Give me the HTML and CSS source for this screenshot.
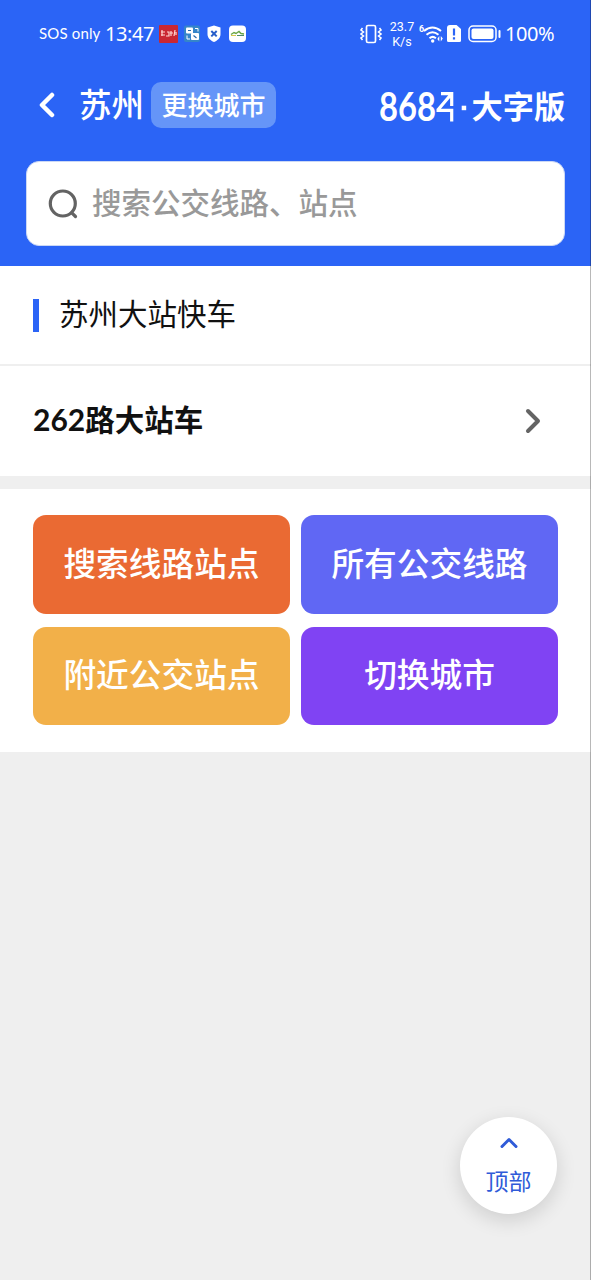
FILE: index.html
```html
<!DOCTYPE html>
<html lang="zh-CN">
<head>
<meta charset="utf-8">
<title>苏州公交</title>
<link rel="stylesheet" href="styles.css">
</head>
<body>
<div class="page">
  <header class="top">
    <div class="status">
      <span class="carrier">SOS only</span>
      <span class="clock">13:47</span>
      <svg class="apps" width="90" height="20" viewBox="0 0 90 20">
        <rect x="0" y="1" width="19" height="18" rx="1" fill="#c92732"/>
        <path d="M2 8h4M3 6v6M2 11h4M8 8l2 0v4H7M12 7v5M11 9h3M16 6l-1 6M17 8v3" stroke="#ffd5cf" stroke-width="1.2" fill="none"/>
        <rect x="25" y="1.500" width="16" height="16.500" rx="2" fill="#3585c9"/>
        <rect x="27" y="3.500" width="7" height="6" rx="1" fill="#fff"/><rect x="32" y="9" width="8" height="7" rx="1" fill="#fff"/>
        <path d="M29 6.500h3M34.500 11.500l3 2.500" stroke="#286aa9" stroke-width="1.200" fill="none"/><path d="M36 4.500h3v3M28 11.500v3.500h3" stroke="#fff" fill="none"/>
        <path d="M55 1.500l6.500 2v6.500c0 4-3 6.500-6.500 8-3.500-1.500-6.500-4-6.500-8V3.500z" fill="#fff"/>
        <path d="M52.300 7l5.400 5.400m0-5.400l-5.400 5.400" stroke="#285ec9" stroke-width="2"/>
        <rect x="70" y="1.500" width="17" height="16.500" rx="4" fill="#fff"/>
        <path d="M72 10.500l3-2 2 1 3-2 2 2 3 .5" stroke="#6aa747" stroke-width="1.500" fill="none"/><path d="M72 11.500h5" stroke="#d8c84d"/><path d="M78 11.500h7" stroke="#4f8b69"/>
      </svg>
      <svg class="vibrate" width="22" height="22" viewBox="0 0 22 22" fill="none" stroke="#fff" stroke-width="1.700">
        <rect x="6.500" y="2.500" width="9" height="17" rx="1.500"/>
        <path d="M2.500 5l-1.500 2 2.500 2L1 11l2.500 2L1 15l1.500 2M19.500 5l1.500 2-2.500 2 2.500 2-2.500 2 2.500 2-1.500 2" stroke-width="1.500"/>
      </svg>
      <span class="speed">23.7<br>K/s</span>
      <svg class="wifi" width="43" height="22" viewBox="0 0 43 22">
        <text class="wifi-gen" x="0" y="9">6</text>
        <g fill="none" stroke="#fff" stroke-width="2"><path d="M5 8q8.500-7 17 0M7.500 11.700q6-5 12 0M10.500 15.200q3.200-2.600 6.400 0"/></g>
        <circle cx="13.700" cy="18" r="1.700" fill="#fff"/>
        <path d="M20.300 13v5.500l-2-2.500zM21.800 18.500V13l2 2.500z" fill="#fff"/>
        <path d="M31 2h6.500L42 6v11.500q0 1.500-1.500 1.500h-11Q28 19 28 17.500V5q0-3 3-3z" fill="#fff"/>
        <path d="M35 5.500v7M35 14.200v2.200" stroke="#2b64f6" stroke-width="2.200"/>
      </svg>
      <svg class="battery" width="34" height="20" viewBox="0 0 34 20">
        <rect x="1" y="2" width="27" height="15.500" rx="4" fill="none" stroke="#fff" stroke-width="1.500"/>
        <rect x="3.500" y="4.500" width="22" height="10.500" rx="2" fill="#fff"/>
        <path d="M31.500 7v6" stroke="#fff" stroke-width="2" stroke-linecap="round"/>
      </svg>
      <span class="percent">100%</span>
    </div>
    <div class="nav">
      <svg class="back" width="18" height="26" viewBox="0 0 18 26" fill="none" stroke="#fff" stroke-width="4.500" stroke-linecap="round" stroke-linejoin="round"><path d="M15 3L5 13l10 10"/></svg>
      <h1 class="city">苏州</h1>
      <a class="change"><span>更换城市</span></a>
      <svg class="logo" width="190" height="60" viewBox="0 -10 190 60">
        <text class="logo-num" x="2" y="34" textLength="57" lengthAdjust="spacingAndGlyphs">868</text>
        <path d="M64 6.700h10.700V19M74 7.500L61 22.800M59.500 23.300h15.200V34.500" fill="none" stroke="#fff" stroke-width="3.200"/>
        <rect x="84.700" y="18.700" width="4.500" height="4.500" fill="#fff"/>
        <text class="logo-text" x="94.500" y="31">大字版</text>
      </svg>
    </div>
    <div class="search">
      <svg width="32" height="32" viewBox="0 0 32 32" fill="none" stroke="#636363" stroke-width="3.200" stroke-linecap="round"><circle cx="15.800" cy="15.500" r="12.500"/><path d="M24.800 24.800l3.700 3.700"/></svg>
      <span>搜索公交线路、站点</span>
    </div>
  </header>
  <section class="heading"><i class="bar"></i><h2 class="title">苏州大站快车</h2></section>
  <section class="route"><span><b class="num">262</b>路大站车</span>
    <svg width="18" height="26" viewBox="0 0 18 26" fill="none" stroke="#646464" stroke-width="4" stroke-linecap="round" stroke-linejoin="round"><path d="M4 3l10 10L4 23"/></svg>
  </section>
  <nav class="grid">
    <a class="btn orange">搜索线路站点</a>
    <a class="btn blue">所有公交线路</a>
    <a class="btn yellow">附近公交站点</a>
    <a class="btn purple">切换城市</a>
  </nav>
  <a class="to-top">
    <svg width="20" height="13" viewBox="0 0 20 13" fill="none" stroke="#2f5bd8" stroke-width="3" stroke-linecap="round" stroke-linejoin="round"><path d="M3 10.500L10 3.500l7 7"/></svg>
    <span>顶部</span>
  </a>
  <div class="edge"></div>
</div>
</body>
</html>
```
FILE: styles.css
```css
* { box-sizing: border-box; }
body { margin: 0; font-family: "Noto Sans CJK SC", sans-serif; }
.page { position: relative; height: 1280px; overflow: hidden; background: #efefef; }
.edge { position: absolute; top: 0; right: 0; width: 1px; height: 100%; background: rgba(0, 0, 0, .28); }

.top { height: 266px; padding: 0 26px; background: #2b64f6; color: #fff; }
.status { display: flex; align-items: center; height: 67px; padding-left: 13px; white-space: nowrap; line-height: 1; }
.carrier { width: 66px; font: 15px/1 Lato, "Open Sans", sans-serif; letter-spacing: .15px; }
.clock { width: 54px; font: 20px/1 "Noto Sans", sans-serif; letter-spacing: -.4px; }
.apps { flex: none; margin-right: 111px; }
.vibrate { flex: none; }
.speed { width: 37px; padding-left: 3px; text-align: center; font: 400 12.500px/15px Roboto, sans-serif; }
.wifi { flex: none; margin-right: 6px; }
.wifi-gen { font: bold 9px Roboto, sans-serif; fill: #fff; }
.battery { flex: none; margin-right: 3px; }
.percent { font: 20px/1 "Noto Sans", sans-serif; letter-spacing: -.4px; }

.nav { display: flex; align-items: center; height: 76px; margin-bottom: 18px; padding-left: 11px; }
.back { margin-right: 24px; }
.city { margin: -4px 7px 0 0; font-size: 32.500px; font-weight: 500; line-height: 46px; }
.change { width: 125px; height: 46px; border-radius: 10px; background: #6595f8; font-size: 26px; font-weight: 500; line-height: 43px; text-align: center; }
.logo { flex: none; margin: 4px -2px 0 auto; }
.logo-num { font: bold 40px Lato, sans-serif; fill: #fff; }
.logo-text { font-size: 31.200px; font-weight: 700; fill: #fff; }

.search { display: flex; align-items: center; height: 85px; padding-left: 20px; border: 1px solid #cbd8f5; border-radius: 13px; background: #fff; color: #999; font-size: 29.500px; font-weight: 500; line-height: 40px; }
.search span { margin: -6px 0 0 13px; }

.heading { display: flex; align-items: center; height: 100px; padding: 0 33px; border-bottom: 2px solid #efefef; background: #fff; }
.bar { width: 6px; height: 33px; margin-right: 20px; background: #2b64f6; }
.title { margin: -7px 0 0; color: #111; font-size: 29.500px; font-weight: 400; line-height: 40px; }
.route { display: flex; align-items: center; justify-content: space-between; height: 110px; padding: 0 49px 0 33px; background: #fff; color: #111; font-size: 29.500px; font-weight: 700; line-height: 40px; }
.route span { margin-top: -7px; }
.num { font: bold 30px/1 Lato, sans-serif; }

.grid { display: grid; grid-template-columns: 257px 257px; grid-template-rows: 99px 98px; gap: 13px 11px; height: 263px; margin-top: 13px; padding: 26px 33px; background: #fff; }
.btn { display: flex; align-items: center; justify-content: center; padding-bottom: 6px; border-radius: 13px; color: #fff; font-size: 32.700px; font-weight: 500; line-height: 44px; white-space: nowrap; }
.orange { background: #ea6a33; }
.blue { background: #6067f4; }
.yellow { background: #f2b049; }
.purple { background: #8043f3; }

.to-top { position: absolute; top: 1117px; left: 460px; display: flex; flex-direction: column; align-items: center; width: 97px; height: 97px; padding-top: 19px; border-radius: 50%; background: #fff; color: #2f5bd8; font-size: 23px; line-height: 30px; box-shadow: 0 6px 20px rgba(0, 0, 0, .14); }
.to-top span { margin-top: 16px; }
```
